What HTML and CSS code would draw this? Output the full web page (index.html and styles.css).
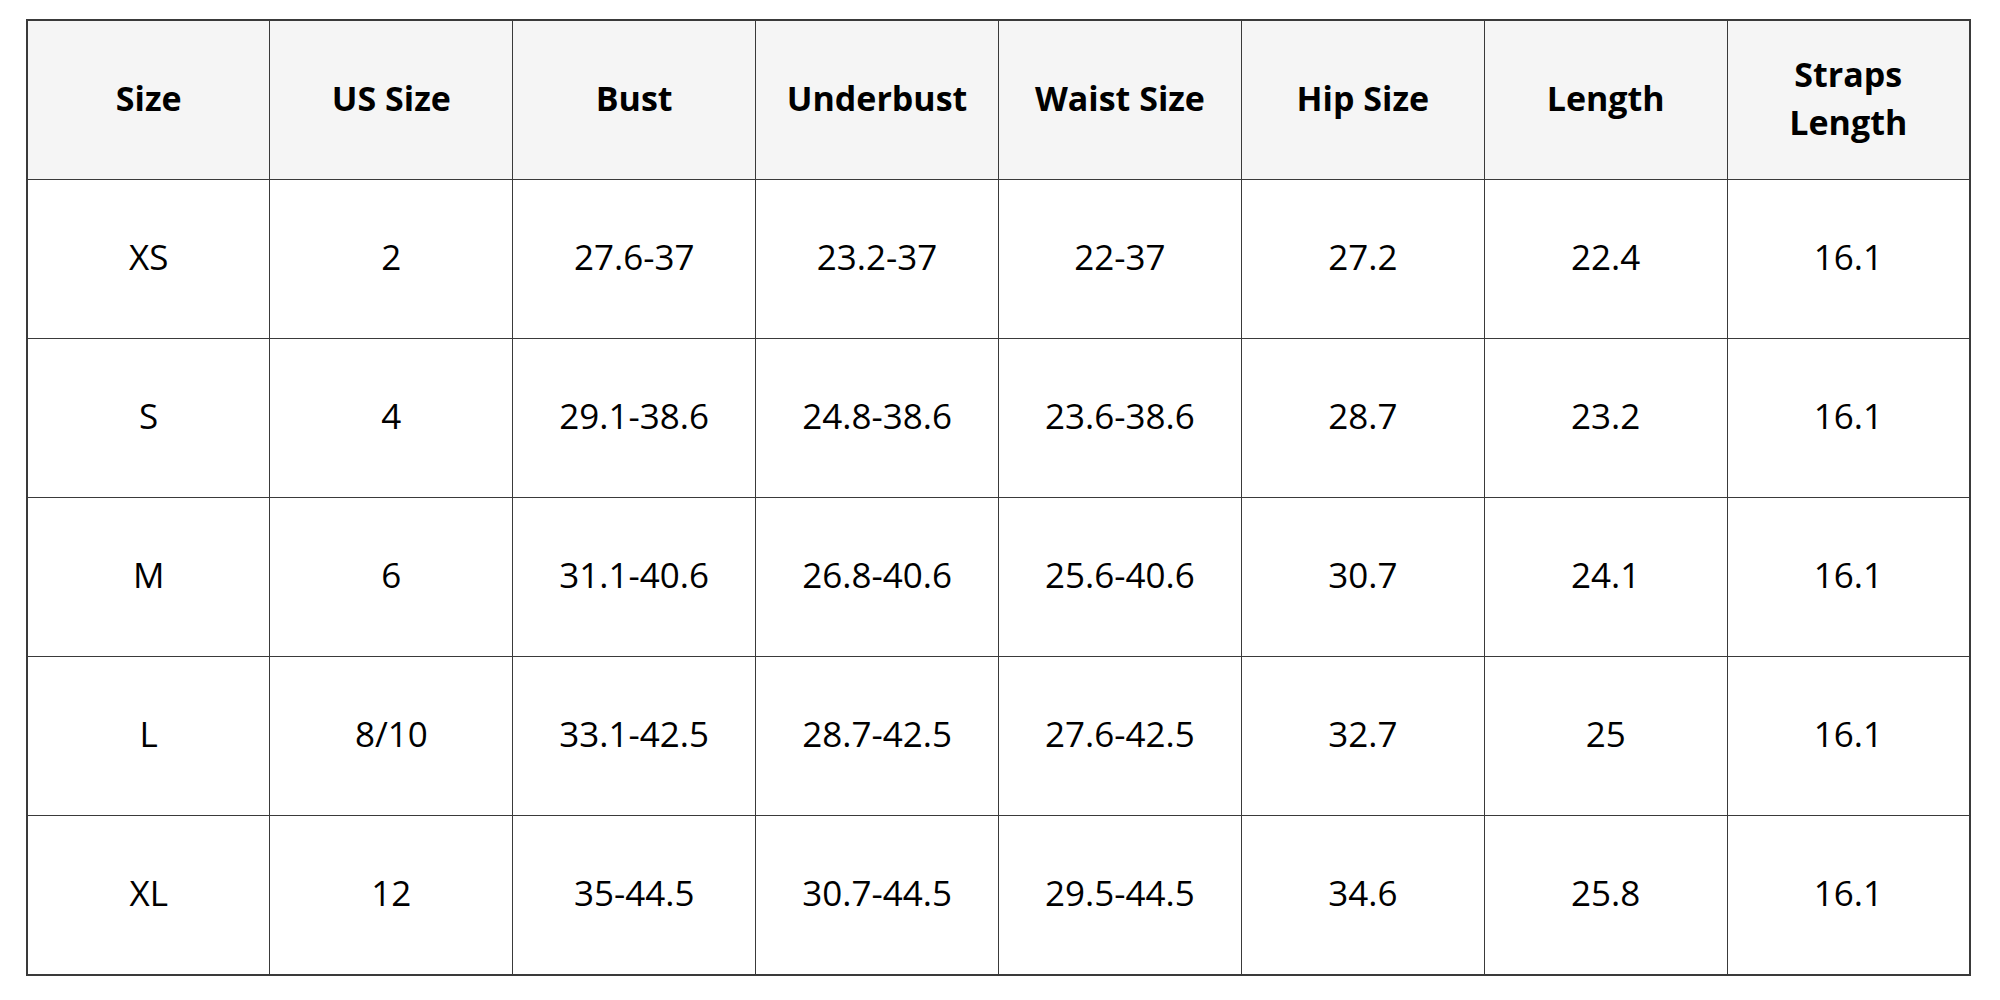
FILE: index.html
```html
<!DOCTYPE html>
<html>
<head>
<meta charset="utf-8">
<link rel="stylesheet" href="styles.css">
</head>
<body>
<div class="page">
<table class="chart">
<thead>
<tr><th>Size</th><th>US Size</th><th>Bust</th><th>Underbust</th><th>Waist Size</th><th>Hip Size</th><th>Length</th><th>Straps<br>Length</th></tr>
</thead>
<tbody>
<tr><td>XS</td><td>2</td><td>27.6-37</td><td>23.2-37</td><td>22-37</td><td>27.2</td><td>22.4</td><td>16.1</td></tr>
<tr><td>S</td><td>4</td><td>29.1-38.6</td><td>24.8-38.6</td><td>23.6-38.6</td><td>28.7</td><td>23.2</td><td>16.1</td></tr>
<tr><td>M</td><td>6</td><td>31.1-40.6</td><td>26.8-40.6</td><td>25.6-40.6</td><td>30.7</td><td>24.1</td><td>16.1</td></tr>
<tr><td>L</td><td>8/10</td><td>33.1-42.5</td><td>28.7-42.5</td><td>27.6-42.5</td><td>32.7</td><td>25</td><td>16.1</td></tr>
<tr><td>XL</td><td>12</td><td>35-44.5</td><td>30.7-44.5</td><td>29.5-44.5</td><td>34.6</td><td>25.8</td><td>16.1</td></tr>
</tbody>
</table>
</div>
</body>
</html>
```

FILE: styles.css
```css
html, body {
  margin: 0;
  padding: 0;
  background: #ffffff;
}
.page {
  padding: 19px 0 0 26px;
}
.chart {
  width: 1945px;
  table-layout: fixed;
  border-collapse: collapse;
  border: 2px solid #3a3a3a;
  font-family: "Open Sans", "Noto Sans", sans-serif;
  color: #000;
}
.chart th,
.chart td {
  border: 1px solid #3a3a3a;
  height: 153px;
  padding: 0 0 5px 0;
  text-align: center;
  vertical-align: middle;
}
.chart th {
  background: #f5f5f5;
  font-size: 34px;
  font-weight: 700;
  line-height: 48px;
}
.chart td {
  font-size: 35px;
  font-weight: 400;
}
```
